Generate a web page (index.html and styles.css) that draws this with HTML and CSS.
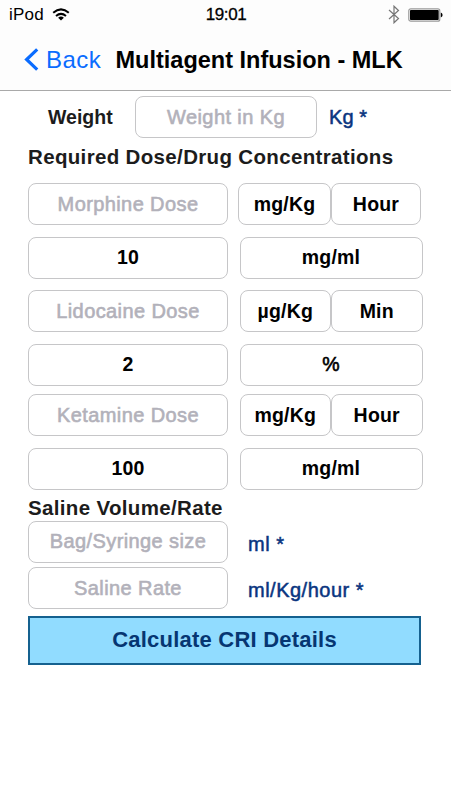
FILE: index.html
```html
<!DOCTYPE html>
<html lang="en">
<head>
<meta charset="utf-8">
<title>Multiagent Infusion - MLK</title>
<link rel="stylesheet" href="styles.css">
</head>
<body>
<header class="top">
  <div class="status">
    <div class="carrier"><span>iPod</span>
      <svg class="wifi" width="18" height="13" viewBox="0 0 18 13" fill="none" stroke="#000" stroke-width="2"><path d="M1.2 4.7Q9-2 16.8 4.7M4 7.9Q9 3.8 14 7.9"/><path d="M9 12.4 6.1 9.7Q9 7.5 11.9 9.7Z" fill="#000" stroke="none"/></svg>
    </div>
    <span class="time">19:01</span>
    <div class="power">
      <svg width="12" height="19" viewBox="0 0 12 19" fill="none" stroke="#777" stroke-width="1.2"><path d="M1 5 10.5 13.5 6 17.8V1.2L10.5 5.5 1 14"/></svg>
      <svg width="35" height="14" viewBox="0 0 35 14"><rect x=".8" y=".8" width="31" height="12.4" rx="2" fill="#fff" stroke="#999" stroke-width="1.2"/><rect x="2" y="2" width="28.7" height="10" rx=".8"/><path d="M32.8 4.5q1.8.7 1.8 2.5t-1.8 2.5z"/></svg>
    </div>
  </div>
  <nav class="nav">
    <a class="back"><svg width="15" height="23" viewBox="0 0 15 23" fill="none" stroke="#0a6cff" stroke-width="3.2"><path d="M13.2 1.3 2.6 11.5 13.2 21.7"/></svg><span>Back</span></a>
    <h1>Multiagent Infusion - MLK</h1>
  </nav>
</header>
<main class="form">
  <div class="row weight"><label>Weight</label><div class="field hint"><span>Weight in Kg</span></div><span class="unit">Kg *</span></div>
  <h2 class="required">Required Dose/Drug Concentrations</h2>
  <div class="row dose first"><div class="field main hint"><span>Morphine Dose</span></div><div class="units"><div class="field per"><span>mg/Kg</span></div><div class="field"><span>Hour</span></div></div></div>
  <div class="row dose"><div class="field main"><span>10</span></div><div class="units"><div class="field"><span>mg/ml</span></div></div></div>
  <div class="row dose"><div class="field main hint"><span>Lidocaine Dose</span></div><div class="units"><div class="field per"><span>µg/Kg</span></div><div class="field"><span>Min</span></div></div></div>
  <div class="row dose tight"><div class="field main"><span>2</span></div><div class="units"><div class="field percent"><span>%</span></div></div></div>
  <div class="row dose"><div class="field main hint"><span>Ketamine Dose</span></div><div class="units"><div class="field per"><span>mg/Kg</span></div><div class="field"><span>Hour</span></div></div></div>
  <div class="row dose last"><div class="field main"><span>100</span></div><div class="units"><div class="field"><span>mg/ml</span></div></div></div>
  <h2 class="saline">Saline Volume/Rate</h2>
  <div class="row volume"><div class="field main hint"><span>Bag/Syringe size</span></div><span class="unit">ml *</span></div>
  <div class="row volume"><div class="field main hint"><span>Saline Rate</span></div><span class="unit">ml/Kg/hour *</span></div>
  <button class="calculate">Calculate CRI Details</button>
</main>
</body>
</html>
```
FILE: styles.css
```css
* { box-sizing: border-box; }
body { margin: 0; width: 451px; height: 800px; overflow: hidden; background: #fff; color: #000; font-family: "Liberation Sans", Arial, sans-serif; }
.top { height: 91px; border-bottom: 1px solid #a9a9a9; background: #fdfdfd; }
.status { height: 29px; display: grid; grid-template-columns: 1fr auto 1fr; align-items: center; padding: 0 8px 0 9px; font-size: 17px; }
.carrier { display: flex; align-items: center; gap: 8px; }
.carrier span { letter-spacing: .25px; }
.wifi { display: block; }
.time { -webkit-text-stroke: .3px; letter-spacing: -.4px; }
.power { display: flex; align-items: center; justify-content: flex-end; gap: 8px; }
.nav { display: flex; align-items: center; height: 61px; padding-left: 24px; }
.back { display: flex; align-items: center; width: 91.5px; gap: 7px; color: #0a6cff; font-size: 24px; letter-spacing: .5px; }
h1 { margin: 0; font-size: 23.5px; line-height: 26px; font-weight: 700; white-space: nowrap; }
.form { padding: 5px 28px 0; display: flex; flex-direction: column; }
.row { display: flex; align-items: center; height: 42px; flex: none; }
.field { display: flex; align-items: center; justify-content: center; flex: 1; height: 42px; border: 1px solid #c6c6c8; border-radius: 8px; background: #fff; font-size: 19.5px; font-weight: 700; white-space: nowrap; letter-spacing: .2px; }
.hint { color: #b2b1ba; font-size: 20px; font-weight: 400; letter-spacing: .4px; -webkit-text-stroke: .6px; }
.percent { font-weight: 400; -webkit-text-stroke: .6px; }
.main { flex: 0 0 200px; }
.weight label { width: 107px; padding-left: 20px; font-size: 19.5px; font-weight: 700; letter-spacing: 0; color: #1c1c1c; }
.weight .field { flex: 0 0 182px; }
.weight .unit { margin-left: 12px; }
.unit { color: #0a3580; font-size: 20px; -webkit-text-stroke: .5px; letter-spacing: .5px; white-space: nowrap; }
.weight .unit { letter-spacing: .1px; }
h2 { margin: 0; color: #1c1c1c; font-size: 20.5px; line-height: 24px; font-weight: 700; letter-spacing: .34px; white-space: nowrap; }
.required { height: 45px; padding-top: 7px; }
.dose { margin-bottom: 11.5px; gap: 11.5px; }
.units { display: flex; flex: 0 0 183px; }
.per { flex: 0 0 91.5px; }
.first { gap: 10px; }
.first .per { flex-basis: 93px; }
.tight { margin-bottom: 8.5px; }
.last { margin-bottom: 0; }
.saline { height: 31px; padding-top: 6px; }
.volume { margin-bottom: 4.7px; }
.volume .unit { margin-left: 20px; padding-top: 5px; }
.calculate { width: 393px; height: 49px; margin: 2px 0 0; padding: 0; border: 2px solid #15618f; border-radius: 0; background: #91dcff; color: #063672; font: 700 22px "Liberation Sans", Arial, sans-serif; letter-spacing: .22px; }
```
